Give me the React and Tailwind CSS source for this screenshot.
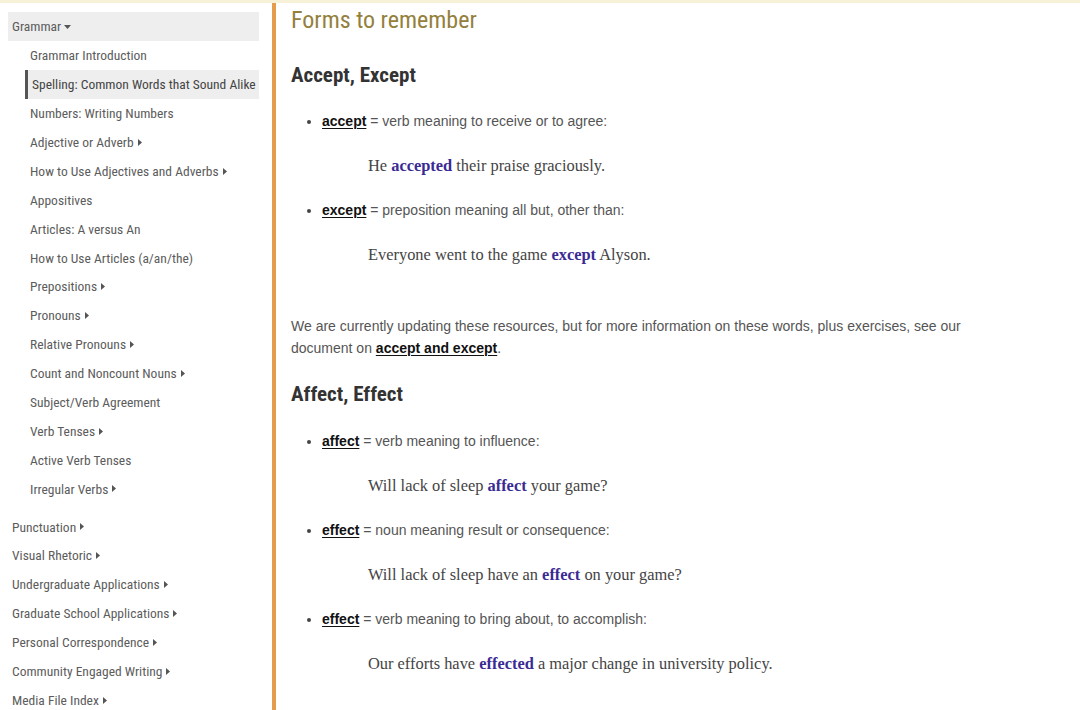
import React from "react";

const grammarItems = [
  { label: "Grammar Introduction" },
  { label: "Spelling: Common Words that Sound Alike", active: true },
  { label: "Numbers: Writing Numbers" },
  { label: "Adjective or Adverb", more: true },
  { label: "How to Use Adjectives and Adverbs", more: true },
  { label: "Appositives" },
  { label: "Articles: A versus An" },
  { label: "How to Use Articles (a/an/the)" },
  { label: "Prepositions", more: true },
  { label: "Pronouns", more: true },
  { label: "Relative Pronouns", more: true },
  { label: "Count and Noncount Nouns", more: true },
  { label: "Subject/Verb Agreement" },
  { label: "Verb Tenses", more: true },
  { label: "Active Verb Tenses" },
  { label: "Irregular Verbs", more: true },
];

const sections = [
  "Punctuation",
  "Visual Rhetoric",
  "Undergraduate Applications",
  "Graduate School Applications",
  "Personal Correspondence",
  "Community Engaged Writing",
  "Media File Index",
];

const Caret = () => (
  <svg width="4" height="7" viewBox="0 0 4 7" className="ml-[4px] inline-block">
    <path d="M0 0 L4 3.5 L0 7 Z" fill="#555" />
  </svg>
);

const CaretDown = () => (
  <svg width="7" height="4" viewBox="0 0 7 4" className="ml-[3px] inline-block">
    <path d="M0 0 L7 0 L3.5 4 Z" fill="#555" />
  </svg>
);

const Term = ({ children }) => (
  <span className="font-bold text-[#111] underline underline-offset-2">{children}</span>
);

const Hi = ({ children }) => <b className="font-bold text-[#3a2a94]">{children}</b>;

const Entry = ({ term, def, children, first }) => (
  <>
    <ul className={`list-disc pl-[31px] marker:text-[#444] ${first ? "" : "mt-[22px]"}`}>
      <li>
        <Term>{term}</Term> = {def}
      </li>
    </ul>
    <p className="mt-[23px] pl-[77px] font-['Liberation_Serif',serif] text-[16.4px] text-[#444]">
      {children}
    </p>
  </>
);

export default function App() {
  return (
    <div className="w-[1080px] h-[710px] overflow-hidden bg-white flex flex-col">
      <div className="h-[3px] bg-[#f7f2d7] shrink-0" />
      <div className="flex flex-1 min-h-0">
        {/* sidebar */}
        <aside className="w-[272px] shrink-0 pl-[8px] pr-[13px] pt-[9px] font-['Roboto_Condensed',sans-serif] text-[13.5px] text-[#5c5c5c]">
          <div className="h-[29px] bg-[#eeeeee] pl-[4px] flex items-center">
            Grammar
            <CaretDown />
          </div>
          {grammarItems.map((it) =>
            it.active ? (
              <div
                key={it.label}
                className="h-[28.9px] ml-[17px] border-l-[3px] border-[#555] bg-[#eeeeee] pl-[4px] flex items-center text-[#444]"
              >
                {it.label}
              </div>
            ) : (
              <div key={it.label} className="h-[28.9px] pl-[22px] flex items-center">
                {it.label}
                {it.more && <Caret />}
              </div>
            )
          )}
          <div className="mt-[9px]">
            {sections.map((s) => (
              <div key={s} className="h-[28.9px] pl-[4px] flex items-center">
                {s}
                <Caret />
              </div>
            ))}
          </div>
        </aside>

        <div className="w-[4px] shrink-0 bg-[#e39d4c]" />

        {/* main content */}
        <main className="flex-1 pl-[15px] pt-[2px] font-['Liberation_Sans',Arial,sans-serif] text-[14px] leading-[22px] text-[#555]">
          <h1 className="font-['Roboto_Condensed',sans-serif] text-[24px] leading-[30px] text-[#94803d]">
            Forms to remember
          </h1>
          <h2 className="mt-[26px] font-['Roboto_Condensed',sans-serif] font-bold text-[21px] leading-[28px] text-[#333]">
            Accept, Except
          </h2>
          <div className="mt-[21px]">
            <Entry first term="accept" def="verb meaning to receive or to agree:">
              He <Hi>accepted</Hi> their praise graciously.
            </Entry>
            <Entry term="except" def="preposition meaning all but, other than:">
              Everyone went to the game <Hi>except</Hi> Alyson.
            </Entry>
          </div>

          <p className="mt-[49px] w-[700px]">
            We are currently updating these resources, but for more information on these words, plus
            exercises, see our document on <Term>accept and except</Term>.
          </p>

          <h2 className="mt-[21px] font-['Roboto_Condensed',sans-serif] font-bold text-[21px] leading-[28px] text-[#333]">
            Affect, Effect
          </h2>
          <div className="mt-[22px]">
            <Entry first term="affect" def="verb meaning to influence:">
              Will lack of sleep <Hi>affect</Hi> your game?
            </Entry>
            <Entry term="effect" def="noun meaning result or consequence:">
              Will lack of sleep have an <Hi>effect</Hi> on your game?
            </Entry>
            <Entry term="effect" def="verb meaning to bring about, to accomplish:">
              Our efforts have <Hi>effected</Hi> a major change in university policy.
            </Entry>
          </div>
        </main>
      </div>
    </div>
  );
}
